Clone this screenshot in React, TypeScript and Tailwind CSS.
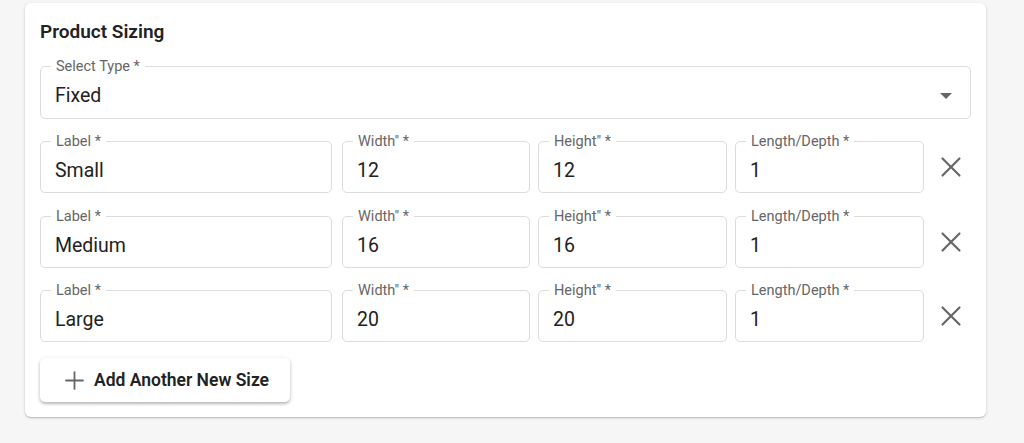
import { X, Plus } from "lucide-react";

type Size = { label: string; width: string; height: string; depth: string };

const sizes: Size[] = [
  { label: "Small", width: "12", height: "12", depth: "1" },
  { label: "Medium", width: "16", height: "16", depth: "1" },
  { label: "Large", width: "20", height: "20", depth: "1" },
];

function Field({ label, value, className = "" }: { label: string; value: string; className?: string }) {
  return (
    <div className={`relative h-[52px] rounded-[5px] border border-[#dcdcdc] bg-white pl-[14px] pt-[17px] ${className}`}>
      <span className="absolute left-[10px] top-0 -translate-y-1/2 bg-white px-[5px] text-[14.5px] leading-none text-[#666]">
        {label}
      </span>
      <div className="text-[19.5px] leading-[23px] text-[#222]">{value}</div>
    </div>
  );
}

export default function App() {
  return (
    <div className="min-h-screen bg-[#f6f6f6] pl-[25px] pt-[3px]" style={{ fontFamily: "Roboto, sans-serif" }}>
      <div className="w-[961px] rounded-[6px] bg-white px-[15px] pb-[15px] pt-[17px] shadow-[0_1px_3px_rgba(0,0,0,0.18),0_1px_1px_rgba(0,0,0,0.1)]">
        <h2 className="text-[19px] font-semibold leading-[23px] text-[#222]">Product Sizing</h2>

        <div className="relative mt-[23px] h-[53px] rounded-[5px] border border-[#dcdcdc] pl-[14px] pt-[17px]">
          <span className="absolute left-[10px] top-0 -translate-y-1/2 bg-white px-[5px] text-[14.5px] leading-none text-[#666]">
            Select Type *
          </span>
          <div className="text-[19.5px] leading-[23px] text-[#222]">Fixed</div>
          <span className="absolute right-[18px] top-[26px] h-0 w-0 border-x-[6.5px] border-t-[6px] border-x-transparent border-t-[#666]" />
        </div>

        <div className="mt-[22px] flex flex-col gap-[22.5px]">
          {sizes.map((s) => (
            <div key={s.label} className="flex items-center">
              <Field label="Label *" value={s.label} className="w-[292px]" />
              <Field label={'Width" *'} value={s.width} className="ml-[10px] w-[188px]" />
              <Field label={'Height" *'} value={s.height} className="ml-2 w-[189px]" />
              <Field label="Length/Depth *" value={s.depth} className="ml-2 w-[189px]" />
              <div className="flex flex-1 justify-center pl-[6px]">
                <X className="h-[34px] w-[34px] text-[#666]" strokeWidth={1.5} />
              </div>
            </div>
          ))}
        </div>

        <button className="mt-4 flex h-[44px] items-center gap-[5px] rounded-[5px] bg-white pl-[20px] pr-[21px] text-[17.5px] font-semibold text-[#222] shadow-[0_2px_3px_rgba(0,0,0,0.22),0_1px_5px_rgba(0,0,0,0.1)]">
          <Plus className="h-[29px] w-[29px] text-[#666]" strokeWidth={1.5} />
          Add Another New Size
        </button>
      </div>
    </div>
  );
}
